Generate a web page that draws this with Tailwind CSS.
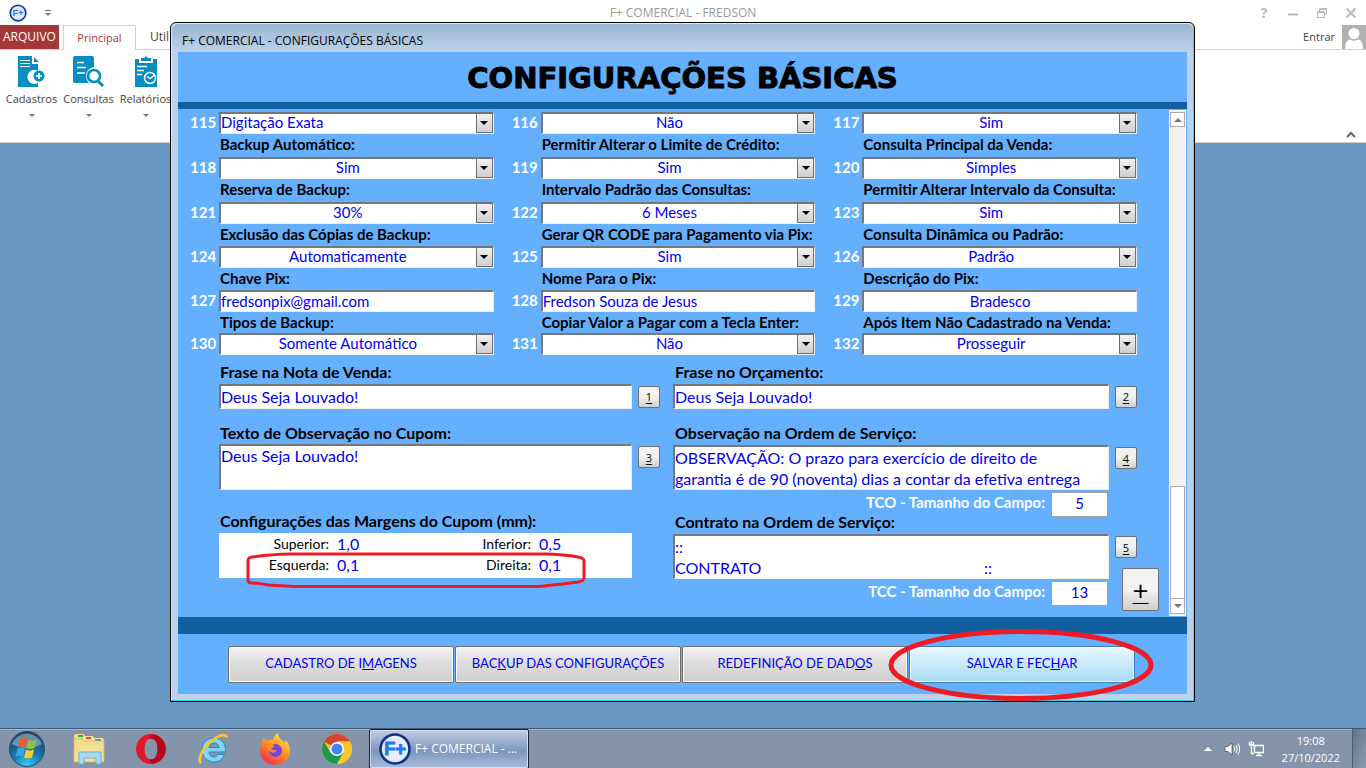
<!DOCTYPE html>
<html lang="pt-BR">
<head>
<meta charset="utf-8">
<title>F+ COMERCIAL - FREDSON</title>
<script src="https://cdn.jsdelivr.net/npm/@tailwindcss/browser@4"></script>
</head>
<body class="relative flex min-h-screen flex-col overflow-hidden bg-[#6898c3] font-['Open_Sans',sans-serif] text-xs text-[#444]">

<header class="bg-white">
  <div class="relative flex h-[25px] items-center px-2">
    <svg class="size-5" viewBox="0 0 32 32" aria-hidden="true"><circle cx="16" cy="16" r="12.5" fill="#dbe8f8" stroke="#12308c" stroke-width="2.6"/><text x="16" y="21.500" text-anchor="middle" font-family="Liberation Sans" font-weight="700" font-size="15" fill="#1f7be8">F+</text></svg>
    <button class="ml-3 p-1" aria-label="Personalizar barra"><svg class="h-2 w-2" viewBox="0 0 8 8"><path d="M1 1.500h6" stroke="#777"/><path d="M1 4h6L4 7z" fill="#777"/></svg></button>
    <div class="absolute inset-x-0 text-center text-[#999] pointer-events-none">F+ COMERCIAL - FREDSON</div>
    <div class="ml-auto flex items-center gap-[17px] pr-px text-[#bbb]">
      <button aria-label="Ajuda" class="w-3 text-sm font-bold">?</button>
      <button aria-label="Minimizar"><svg class="size-3" viewBox="0 0 12 12"><path d="M1 7.500h10" stroke="currentColor" stroke-width="2"/></svg></button>
      <button aria-label="Restaurar"><svg class="size-3" viewBox="0 0 12 12" fill="none" stroke="currentColor"><path d="M1.500 4.500h7v6h-7zM1 5.500h8M3.500 4V1.500h7v6H9M3 2.500h8"/></svg></button>
      <button aria-label="Fechar"><svg class="size-3" viewBox="0 0 12 12"><path d="M1.500 1.500l9 9M10.500 1.500l-9 9" stroke="currentColor" stroke-width="2"/></svg></button>
    </div>
  </div>
  <div class="flex h-[25px] border-b border-[#d0d0d0]">
    <button class="w-[59px] bg-[#a4373a] text-white">ARQUIVO</button>
    <button class="-mb-px ml-1 w-[73px] border border-b-0 border-[#d0d0d0] bg-white text-[11px] text-[#a4373a]">Principal</button>
    <button class="ml-3.5 w-5 overflow-hidden whitespace-nowrap text-left">Util</button>
    <div class="ml-auto flex items-center gap-[7px]"><a href="#" class="text-[11px] text-[#444]">Entrar</a>
      <svg class="size-6" viewBox="0 0 24 24" aria-hidden="true"><path fill="#b1b1b1" d="M0 0h24v24H0z"/><circle cx="12" cy="8.500" r="5.500" fill="#fff"/><path d="M3 24c0-6 2-9 5-9.500 2 1.500 6 1.500 8 0 3 .5 5 3.500 5 9.500z" fill="#fff"/></svg></div>
  </div>
  <div class="flex h-[93px] border-b border-[#d0d0d0] pl-[3px] pt-1.5 text-[11px]">
    <button class="flex w-[57px] flex-col items-center"><svg class="h-8 w-8" viewBox="3 0 32 32"><path fill="#068ec1" d="M5 0h14v8h6v7a7 7 0 1 0 0 12v4H5z"/><path fill="#068ec1" d="M21 1l5 5h-5z"/><path d="M7 4.500h10M7 7.500h10M7 10.500h10" stroke="#fff"/><circle cx="26" cy="20" r="5.500" fill="#068ec1"/><path d="M26 17v6M23 20h6" stroke="#fff" stroke-width="1.600"/></svg><span class="mt-1">Cadastros</span><i class="mt-[7px] border-x-3 border-t-3 border-x-transparent border-t-[#777]"></i></button>
    <button class="flex w-[57px] flex-col items-center"><svg class="h-8 w-8" viewBox="1 0 32 32"><path fill="#068ec1" d="M3 0h17q2 0 2 2v9q-8 2-8 9 0 4 3 7H3q-2 0-2-2V2q0-2 2-2z"/><path d="M5 6.500h7M5 11.500h9M5 17h8" stroke="#fff" stroke-width="1.600"/><circle cx="22" cy="20" r="6" fill="#fff" stroke="#068ec1" stroke-width="2.600"/><path d="M26 25l5 5" stroke="#068ec1" stroke-width="3"/></svg><span class="mt-1">Consultas</span><i class="mt-[7px] border-x-3 border-t-3 border-x-transparent border-t-[#777]"></i></button>
    <button class="flex w-[57px] flex-col items-center"><svg class="h-8 w-8" viewBox="0 0 32 32"><path fill="#068ec1" d="M5 3h4v4h14V3h4v28H5z"/><path fill="#068ec1" d="M11 5V2h3l2-2 2 2h3v3z"/><path d="M7 10.500h10M7 14.500h7M7 18.500h5" stroke="#fff" stroke-width="1.400"/><circle cx="20" cy="22" r="5.500" fill="none" stroke="#fff" stroke-width="1.500"/><path d="M17 20.500l3 2 4-3" fill="none" stroke="#fff" stroke-width="1.500"/></svg><span class="mt-1">Relatórios</span><i class="mt-[7px] border-x-3 border-t-3 border-x-transparent border-t-[#777]"></i></button>
    <button class="ml-auto self-end p-2.5 pb-0.5" aria-label="Recolher a faixa"><svg class="h-2.5 w-2.5" viewBox="0 0 10 10"><path d="M1 7l4-4 4 4" fill="none" stroke="#666" stroke-width="2"/></svg></button>
  </div>
</header>

<main class="absolute left-[170px] right-[171px] top-[22px] rounded-t-md border border-black bg-[#bcd2ea] shadow-[inset_-1px_-1px_0_#3cd5ee,inset_1px_1px_0_#dceaf7]">
  <h1 class="mx-px mt-px flex h-[28px] items-center rounded-t-md bg-linear-to-b from-[#9bb7d3] to-[#bcd2ea] px-2.5 pt-1.5 text-xs text-black">F+ COMERCIAL - CONFIGURAÇÕES BÁSICAS</h1>
  <form class="mx-[7px] mb-[7px] bg-[#64b0ff] font-['Lato',sans-serif] text-[15px] text-[#0000f0]">
    <h2 class="flex h-[50px] items-center justify-center pt-0.5 font-['DejaVu_Sans',sans-serif] text-[29px] font-bold text-black [-webkit-text-stroke:1px_black]">CONFIGURAÇÕES BÁSICAS</h2>
    <div class="h-[7px] bg-[#115f9e]"></div>
    <div class="flex">
      <div class="relative min-w-0 flex-1 pb-[11px] pl-3 pr-8 pt-[3px]">
        <div id="fields" class="grid grid-cols-3 gap-x-[18px]"></div>
        <div class="mt-[7px] grid grid-cols-[441fr_464fr] gap-x-[13px] pl-[29px] leading-[21px]">
          <div>
            <label for="t1" class="block h-[22px] pl-px text-base leading-5 font-bold text-black">Frase na Nota de Venda:</label>
            <div class="flex items-center gap-1.5"><input id="t1" value="Deus Seja Louvado!" class="h-[25px] min-w-0 flex-1 border border-l-2 border-t-2 border-[#f0f0f0] border-l-[#777] border-t-[#777] bg-white pb-0.5 text-base"><button type="button" class="h-[22px] w-[22px] rounded-xs border border-[#707070] bg-linear-to-b from-[#f2f2f2] from-50% to-[#cfcfcf] font-['Open_Sans',sans-serif] text-[11px] leading-none text-black underline underline-offset-2">1</button></div>
            <label for="t3" class="mt-[14px] block h-[21px] pl-px text-base leading-5 font-bold text-black">Texto de Observação no Cupom:</label>
            <div class="flex items-start gap-1.5"><textarea id="t3" class="h-[46px] min-w-0 flex-1 resize-none overflow-hidden border border-l-2 border-t-2 border-[#f0f0f0] border-l-[#777] border-t-[#777] bg-white text-base leading-5">Deus Seja Louvado!</textarea><button type="button" class="mt-0.5 h-[22px] w-[22px] rounded-xs border border-[#707070] bg-linear-to-b from-[#f2f2f2] from-50% to-[#cfcfcf] font-['Open_Sans',sans-serif] text-[11px] leading-none text-black underline underline-offset-2">3</button></div>
            <h3 class="mt-[21px] h-[22px] pl-px text-base leading-5 font-bold text-black">Configurações das Margens do Cupom (mm):</h3>
            <div class="relative mr-7 grid h-[45px] grid-cols-[110px_102px_100px_1fr] items-center bg-white pb-0.5 text-black">
              <label for="m1" class="text-right text-sm leading-5">Superior:</label><input id="m1" value="1,0" class="ml-2 h-5 w-12 text-base text-[#0000f0]">
              <label for="m2" class="text-right text-sm leading-5">Inferior:</label><input id="m2" value="0,5" class="ml-2 h-5 w-12 text-base text-[#0000f0]">
              <label for="m3" class="text-right text-sm leading-5">Esquerda:</label><input id="m3" value="0,1" class="ml-2 h-5 w-12 text-base text-[#0000f0]">
              <label for="m4" class="text-right text-sm leading-5">Direita:</label><input id="m4" value="0,1" class="ml-2 h-5 w-12 text-base text-[#0000f0]">
              <svg class="pointer-events-none absolute left-[27px] top-[19px] h-[36px] w-[340px]" viewBox="0 0 340 36" fill="none" stroke="#ed1c24" stroke-width="3"><path d="M2 28V8Q2 5 10 4.500Q25 2.500 44 2H302Q322 3 332 5Q338 6 338 9V26Q338 29 332 30Q316 32 302 33.500Q296 34.500 286 34.500H48Q40 34 22 33Q12 31 6 31Q2 31 2 28Z"/></svg>
            </div>
          </div>
          <div>
            <label for="t2" class="block h-[22px] pl-0.5 text-base leading-5 font-bold text-black">Frase no Orçamento:</label>
            <div class="flex items-center gap-1.5"><input id="t2" value="Deus Seja Louvado!" class="h-[25px] min-w-0 flex-1 border border-l-2 border-t-2 border-[#f0f0f0] border-l-[#777] border-t-[#777] bg-white pb-0.5 text-base"><button type="button" class="h-[22px] w-[22px] rounded-xs border border-[#707070] bg-linear-to-b from-[#f2f2f2] from-50% to-[#cfcfcf] font-['Open_Sans',sans-serif] text-[11px] leading-none text-black underline underline-offset-2">2</button></div>
            <label for="t4" class="mt-[14px] block h-[22px] pl-0.5 text-base leading-5 font-bold text-black">Observação na Ordem de Serviço:</label>
            <div class="flex items-start gap-1.5"><textarea id="t4" class="h-[45px] min-w-0 flex-1 resize-none overflow-hidden border border-l-2 border-t-2 border-[#f0f0f0] border-l-[#777] border-t-[#777] bg-white text-base leading-[21px]">OBSERVAÇÃO: O prazo para exercício de direito de
garantia é de 90 (noventa) dias a contar da efetiva entrega</textarea><button type="button" class="mt-0.5 h-[22px] w-[22px] rounded-xs border border-[#707070] bg-linear-to-b from-[#f2f2f2] from-50% to-[#cfcfcf] font-['Open_Sans',sans-serif] text-[11px] leading-none text-black underline underline-offset-2">4</button></div>
            <div class="mt-0.5 grid h-[42px]">
              <div class="col-start-1 row-start-1 mr-[29px] flex items-start justify-end gap-1.5 self-start text-white"><label for="tco" class="font-bold">TCO - Tamanho do Campo:</label><input id="tco" value="5" class="h-[25px] w-[57px] border border-[#a0a0a0] bg-white pb-1 text-center text-[#0000f0]"></div>
              <label for="t5" class="col-start-1 row-start-1 self-end justify-self-start pb-0.5 pl-0.5 text-base leading-[21px] font-bold text-black">Contrato na Ordem de Serviço:</label>
            </div>
            <div class="flex items-start gap-1.5"><textarea id="t5" class="h-[45px] min-w-0 flex-1 resize-none overflow-hidden border border-l-2 border-t-2 border-[#f0f0f0] border-l-[#777] border-t-[#777] bg-white text-base leading-[21px] [tab-size:309px]">::
CONTRATO	::</textarea><button type="button" class="mt-0.5 h-[22px] w-[22px] rounded-xs border border-[#707070] bg-linear-to-b from-[#f2f2f2] from-50% to-[#cfcfcf] font-['Open_Sans',sans-serif] text-[11px] leading-none text-black underline underline-offset-2">5</button></div>
            <div class="mr-[29px] mt-0.5 flex items-start justify-end gap-1.5 text-white"><label for="tcc" class="font-bold">TCC - Tamanho do Campo:</label><input id="tcc" value="13" class="h-[25px] w-[57px] border border-[#a0a0a0] bg-white pb-1 text-center text-[#0000f0]"></div>
          </div>
        </div>
        <button type="button" class="absolute bottom-1.5 right-2.5 h-[43px] w-[37px] rounded-xs border border-[#707070] bg-linear-to-b from-[#f2f2f2] from-50% to-[#cfcfcf] font-['Open_Sans',sans-serif] text-[28px] leading-none text-black underline decoration-1 underline-offset-2">+</button>
      </div>
      <div class="my-px mr-px flex w-[17px] flex-col border border-white bg-[#f1f1f1]" aria-hidden="true">
        <div class="mt-px flex h-[15px] items-center justify-center border border-[#ababab] bg-white"><i class="border-x-4 border-b-4 border-x-transparent border-b-[#777]"></i></div>
        <div class="flex-1"></div>
        <div class="h-[113px] border border-[#ababab] bg-white"></div>
        <div class="mb-px flex h-[15px] items-center justify-center border border-t-0 border-[#ababab] bg-white"><i class="border-x-4 border-t-4 border-x-transparent border-t-[#777]"></i></div>
      </div>
    </div>
    <div class="h-[17px] bg-[#115f9e]"></div>
    <div class="relative flex h-[60px] items-center gap-px pl-[50px] pr-[52px] text-[13px]">
      <button type="button" class="h-[37px] flex-1 rounded-xs border border-[#707070] bg-linear-to-b from-[#f2f2f2] via-[#dcdcdc] via-50% to-[#cfcfcf] shadow-[inset_0_0_0_1px_#fafafa]">CADASTRO DE I<u>M</u>AGENS</button>
      <button type="button" class="h-[37px] flex-1 rounded-xs border border-[#707070] bg-linear-to-b from-[#f2f2f2] via-[#dcdcdc] via-50% to-[#cfcfcf] shadow-[inset_0_0_0_1px_#fafafa]">BAC<u>K</u>UP DAS CONFIGURAÇÕES</button>
      <button type="button" class="h-[37px] flex-1 rounded-xs border border-[#707070] bg-linear-to-b from-[#f2f2f2] via-[#dcdcdc] via-50% to-[#cfcfcf] shadow-[inset_0_0_0_1px_#fafafa]">REDEFINIÇÃO DE DAD<u>O</u>S</button>
      <button type="button" class="h-[37px] flex-1 rounded-xs border border-[#3c7fb1] bg-linear-to-b from-[#eaf6fd] via-[#c8e8fb] via-50% to-[#a7d9f5] shadow-[inset_0_0_0_1px_#fafafa]">SALVAR E FEC<u>H</u>AR</button>
      <svg class="pointer-events-none absolute -top-1.5 right-[33px] z-10 h-[74px] w-[266px]" viewBox="0 0 266 74" fill="none"><ellipse cx="133" cy="37" rx="130" ry="33.500" stroke="#ed1c24" stroke-width="5"/></svg>
    </div>
  </form>
</main>

<footer class="mt-auto flex h-10 items-center border-t border-[#3f5a78] bg-[#8495ab] shadow-[inset_0_1px_0_#a9b7c8] text-white">
  <button class="ml-2" aria-label="Iniciar"><svg class="size-[38px]" viewBox="0 0 38 38"><defs><radialGradient id="orb" cx=".5" cy=".95" r=".9"><stop offset="0" stop-color="#35d0f5"/><stop offset=".45" stop-color="#1779b5"/><stop offset="1" stop-color="#1c4469"/></radialGradient></defs><circle cx="19" cy="19" r="17.500" fill="url(#orb)" stroke="#26496b"/><path d="M4 14a16 16 0 0 1 30 0q-15 8-30 0z" fill="#fff" opacity=".35"/><path d="M12 9q4-2 7.500 0l-2 8.500q-4-2-7.500 0z" fill="#f0592a"/><path d="M20.500 10q4 2 8 0l-2 8q-4 2-8 0z" fill="#8cc63e"/><path d="M9.500 18.500q4-2 7.500 0l-2 8q-4-2-7.500 0z" fill="#35a6e6"/><path d="M18 19.500q4 2 8 0l-2 8q-4 2-8 0z" fill="#fecb2f"/></svg></button>
  <button class="ml-[27px]" aria-label="Explorer"><svg class="h-[32px] w-[32px]" viewBox="0 0 32 32"><path d="M1 3l1-2h9l1 2v3H1z" fill="#eed982"/><path d="M5 2h5v2H5z" fill="#2fae46"/><path d="M10 5l1-2h9l1 2v3H10z" fill="#f5e49b"/><path d="M13 4h5v2h-5z" fill="#d64a3a"/><path d="M19 7l1-2h10l1 2v22H19z" fill="#f5e49b"/><path d="M22 6h6v2h-6z" fill="#3b9ae0"/><path d="M1 6h9v2h21v21H1z" fill="#f3df93" stroke="#d2b75a" stroke-width=".8"/><path d="M6 19h22v12h-5v-6H11v6H6z" fill="#a9d9f2" stroke="#6fb0d8"/></svg></button>
  <button class="ml-[30px]" aria-label="Opera"><svg class="size-8" viewBox="0 0 32 32"><path fill="#e5152b" fill-rule="evenodd" d="M16 1a15 15 0 1 0 0 30 15 15 0 0 0 0-30zm0 4.500c4 0 6.500 4.500 6.500 10.500S20 26.500 16 26.500 9.500 22 9.500 16 12 5.500 16 5.500z"/><path fill="#a70014" d="M18 1.200A15 15 0 0 1 18 30.800q-3-1-4-4.500 8.500 1.500 8.500-10.300T14 5.700q1-3.500 4-4.500z" opacity=".75"/></svg></button>
  <button class="ml-[30px]" aria-label="Internet Explorer"><svg class="size-8" viewBox="0 0 32 32"><path d="M17 5C9 5 5 11 5 17s5 12 12 12c5 0 9-3 10.500-7.500H21c-1 1.500-2 2.500-4 2.500-3 0-5-2-5-5h16.500C29 10 24 5 17 5zm-5 9.500c.5-3 2.500-4.500 5-4.500s4.500 1.500 5 4.500z" fill="#7fd4fa" stroke="#2b86c8"/><path d="M4 30C0 27 6 14 15 7.500S29 1 30 4.500" fill="none" stroke="#fcc72c" stroke-width="2.600"/></svg></button>
  <button class="ml-[30px]" aria-label="Firefox"><svg class="size-8" viewBox="0 0 32 32"><defs><linearGradient id="ff" x1=".8" y1="0" x2=".2" y2="1"><stop offset="0" stop-color="#ffe645"/><stop offset=".5" stop-color="#ff8a20"/><stop offset="1" stop-color="#f2275c"/></linearGradient></defs><path d="M3 9l1-5q2 3 4 4 2-2 6-1 1-5 5-7 0 5 5 8l2 2 1-3q4 5 4 11A15 14 0 0 1 1 18Q1 12 3 9z" fill="url(#ff)"/><circle cx="16.500" cy="17.500" r="6.500" fill="#7542e5"/><path d="M7 12q6-2 9 2-3 0-4 2 3 2 6 1-2 4-6 2-5-2-5-7z" fill="#ff8a20"/></svg></button>
  <button class="ml-[30px]" aria-label="Chrome"><svg class="size-8" viewBox="0 0 32 32"><circle cx="16" cy="16" r="15" fill="#fbc116"/><path d="M16 16L3 8.500A15 15 0 0 1 29 8.500H16z" fill="#d8442f"/><path d="M3 8.500A15 15 0 0 0 16 31l6.500-11.300L16 16l-6.500 3.800z" fill="#1e9a50"/><path d="M29 8.500H16v7.500l6.500 3.700L16 31A15 15 0 0 0 29 8.500z" fill="#fcc72c"/><circle cx="16" cy="16" r="7" fill="#fff"/><circle cx="16" cy="16" r="5.500" fill="#4285f4"/></svg></button>
  <button class="ml-4 flex h-10 w-[160px] items-center gap-1 rounded-xs border border-[#16202e] bg-linear-to-b from-[#c3cfe0] via-[#7c96bd] via-55% to-[#a9bcd8] pl-[9px] shadow-[inset_0_0_0_1px_#d5dfec]">
    <svg class="size-8" viewBox="0 0 32 32"><circle cx="16" cy="16" r="14.500" fill="#e4edf8" stroke="#12308c" stroke-width="2.600"/><text x="16" y="22" text-anchor="middle" font-family="Liberation Sans" font-weight="700" font-size="18" fill="#1f7be8" stroke="#1f7be8">F+</text></svg>
    F+ COMERCIAL - ...</button>
  <div class="ml-auto flex h-full items-center gap-3">
    <i class="border-x-4 border-b-4 border-x-transparent border-b-white"></i>
    <svg class="size-4" viewBox="0 0 16 16" aria-label="Volume"><path d="M1 5.500h3L8 2v12l-4-3.500H1z" fill="#fff" stroke="#444" stroke-width=".7"/><path d="M10 5.500q1.500 2.500 0 5M12 4q2.500 4 0 8M14 2.500q3.500 5.500 0 11" fill="none" stroke="#fff"/></svg>
    <svg class="-ml-1 size-4" viewBox="0 0 16 16" aria-label="Rede"><path d="M6.500 4.500h9v7h-9z" fill="#7d90a8" stroke="#fff" stroke-width="1.400"/><path d="M8 14.500h6M11 12v2M3.500 5v7.500H6M1.500 1v3h4V1M3.500 0v4" fill="none" stroke="#fff" stroke-width="1.400"/></svg>
    <div class="ml-1.5 text-center text-[11px] leading-[17px]">19:08<br>27/10/2022</div>
    <button aria-label="Mostrar área de trabalho" class="h-full w-[14px] border-l border-[#4c5f78] bg-linear-to-br from-[#5f7489] to-[#8b9db3]"></button>
  </div>
</footer>

<script>
const L = "Backup Automático:|Permitir Alterar o Limite de Crédito:|Consulta Principal da Venda:|Reserva de Backup:|Intervalo Padrão das Consultas:|Permitir Alterar Intervalo da Consulta:|Exclusão das Cópias de Backup:|Gerar QR CODE para Pagamento via Pix:|Consulta Dinâmica ou Padrão:|Chave Pix:|Nome Para o Pix:|Descrição do Pix:|Tipos de Backup:|Copiar Valor a Pagar com a Tecla Enter:|Após Item Não Cadastrado na Venda:".split("|");
const V = "Digitação Exata|Não|Sim|Sim|Sim|Simples|30%|6 Meses|Sim|Automaticamente|Sim|Padrão|fredsonpix@gmail.com|Fredson Souza de Jesus|Bradesco|Somente Automático|Não|Prosseguir".split("|");
const labelHeight = ["", "h-[23px]", "h-[23px]", "h-[22px]", "h-[22px]", "h-[21px]"];
document.getElementById("fields").innerHTML = V.map((v, i) => {
  const n = 115 + i, row = Math.floor(i / 3);
  const label = row ? `<label for="f${n}" class="${labelHeight[row]} col-start-2 block pl-px font-bold leading-[21px] text-black whitespace-nowrap">${L[i - 3]}</label>` : "";
  const box = "block h-[22px] w-full appearance-none border border-l-2 border-t-2 border-[#f0f0f0] border-l-[#777] border-t-[#777] bg-white pb-0.5 leading-[17px]";
  const align = i === 0 || i === 12 || i === 13 ? "" : row === 4 ? "text-center" : "[text-align-last:center]";
  const control = row === 4
    ? `<input id="f${n}" value="${v}" class="${box} ${align}">`
    : `<div class="relative"><select id="f${n}" class="${box} ${align} pr-[18px]"><option>${v}</option></select><span class="pointer-events-none absolute right-px top-px flex h-[20px] w-[17px] items-center justify-center border border-[#707070] bg-linear-to-b from-[#f2f2f2] to-[#cfcfcf]"><i class="border-x-4 border-t-4 border-x-transparent border-t-black"></i></span></div>`;
  return `<div class="grid grid-cols-[29px_minmax(0,1fr)] items-start">${label}<span class="col-start-1 font-bold leading-[21px] text-white">${n}</span>${control}</div>`;
}).join("");
</script>
</body>
</html>
